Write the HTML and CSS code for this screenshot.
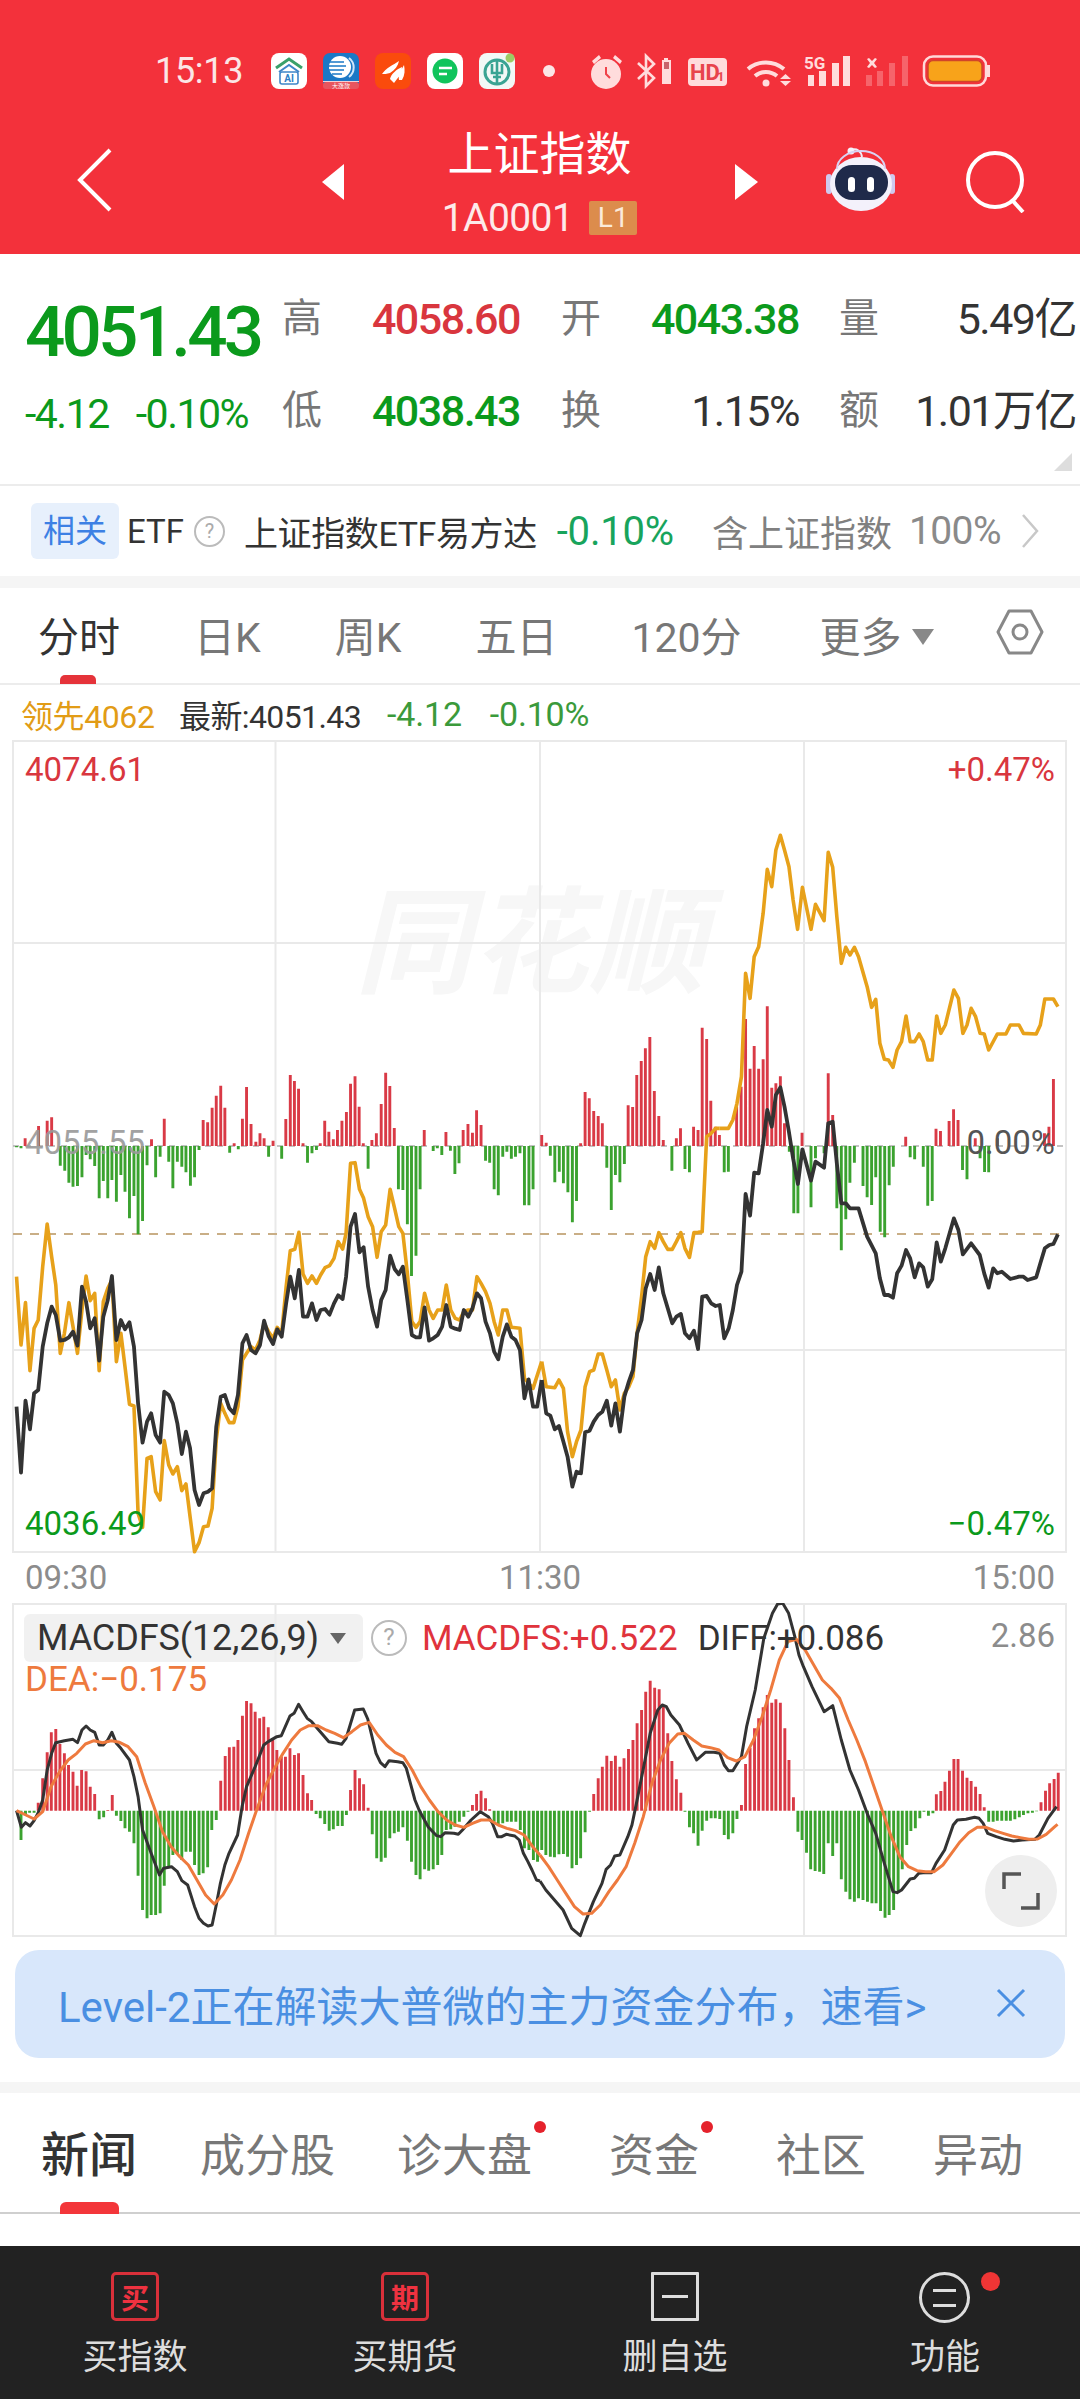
FILE: index.html
```html
<!DOCTYPE html>
<html lang="zh-CN">
<head>
<meta charset="utf-8">
<title>上证指数</title>
<link rel="stylesheet" href="styles.css">
</head>
<body>
<div class="page">
<header class="header">
  <div class="status">
    <span class="clock">15:13</span>
    <div class="apps">
      <svg class="app" viewBox="0 0 36 36"><rect width="36" height="36" rx="8" fill="#fff"/><path d="M5 15 18 6l13 9" fill="none" stroke="#3aa06a" stroke-width="3"/><path d="M8 19 18 12l10 7" fill="none" stroke="#3f86c8" stroke-width="2"/><rect x="9" y="19" width="18" height="12" rx="2" fill="none" stroke="#3f86c8" stroke-width="1.6"/><text x="18" y="29" class="app-ai">AI</text></svg>
      <svg class="app" viewBox="0 0 36 36"><rect width="36" height="36" rx="7" fill="#1b78c6"/><circle cx="17" cy="14" r="11" fill="#fff"/><path d="M6 9h15M6 13h17M6 17h15M9 21h10" stroke="#1b78c6" stroke-width="1.6"/><path d="M26 5a12 12 0 0 1 0 19" fill="none" stroke="#cfe6f8" stroke-width="2"/><path d="M0 28h36v1H0z" fill="#f4d0d4"/><rect y="29" width="36" height="7" rx="3" fill="#e8555e"/><text x="18" y="35" class="app-tiny">大涨款</text></svg>
      <svg class="app" viewBox="0 0 36 36"><rect width="36" height="36" rx="8" fill="#fa4b0c"/><path d="M7 21C11 15 18 12 24 8c-1 5-4 9-9 12-3 1-6 1-8 1zM15 26c1-5 7-10 12-12 0 5-2 9-5 12l-3 4zM24 27c-1-4 2-10 5-15 1 5 1 10-2 15z" fill="#fff"/></svg>
      <svg class="app" viewBox="0 0 36 36"><rect width="36" height="36" rx="8" fill="#fff"/><circle cx="18" cy="18" r="12.5" fill="#10c45c"/><path d="M12 15h13M12 21h8" stroke="#fff" stroke-width="2.6"/></svg>
      <svg class="app" viewBox="0 0 36 36"><rect width="36" height="36" rx="8" fill="#f2f8f6"/><circle cx="18" cy="19" r="12" fill="none" stroke="#3aa493" stroke-width="3"/><path d="M18 7v24M13 11v9h10v-9M14 24h8" fill="none" stroke="#3aa493" stroke-width="2.6"/><circle cx="31" cy="5" r="4.5" fill="#9ccc65"/></svg>
    </div>
    <i class="status-dot"></i>
    <svg class="sys" viewBox="590 50 400 42">
      <g class="sys-fill">
        <circle cx="606" cy="74" r="15"/>
        <path d="M592 61l7-6 2 3-7 6zM613 58l2-3 7 6-2 3z"/>
        <path d="M662 60h2v-2h4v2h3v24h-9z"/>
        <rect x="688" y="58" width="39" height="28" rx="4"/>
        <path d="M780 79l5.500-5 5.500 5zM780 81h11l-5.500 5z"/>
        <circle cx="766" cy="83" r="3.500"/>
        <path d="M808 75h6v11h-6zM819 71h7v15h-7zM832 63h7v23h-7zM843 56h7v30h-7z"/>
        <path d="M867 59l2-1 3 3 3-3 2 1-3 4 3 4-2 1-3-3-3 3-2-1 3-4z"/>
        <path d="M987 65h3v12h-3z"/>
      </g>
      <path d="M606 67v7l4 4" fill="none" stroke="#f0424a" stroke-width="2"/>
      <rect x="664" y="62" width="5" height="7" fill="#c8646c"/>
      <path d="M638 63l16 15-8 8V56l8 8-16 15" class="sys-line"/>
      <path d="M748 69a28 28 0 0 1 36 0M755 76a17 17 0 0 1 22 0" class="sys-line sys-wifi"/>
      <text x="690" y="80" class="sys-hd">HD</text><text x="717" y="81" class="sys-hd1">1</text>
      <text x="804" y="69" class="sys-5g">5G</text>
      <path d="M866 75h6v11h-6zM877 71h6v15h-6zM889 63h6v23h-6zM902 56h6v30h-6z" class="sys-dim"/>
      <rect x="924" y="56.500" width="62" height="29" rx="9" fill="none" stroke="#ffd9d9" stroke-width="2.500"/>
      <rect x="928" y="60.500" width="54" height="21" rx="5" fill="#f8a31a" stroke="#d0452a" stroke-width="1.500"/>
    </svg>
  </div>
  <nav class="nav">
    <svg class="back" viewBox="0 0 35 64"><path d="M33 2 3 32l30 30" fill="none" stroke="#fff" stroke-width="4"/></svg>
    <i class="tri-left"></i>
    <div class="nav-title">
      <div class="title">上证指数</div>
      <div class="code"><span>1A0001</span><b class="badge">L1</b></div>
    </div>
    <i class="tri-right"></i>
    <svg class="robot" viewBox="0 0 70 66"><path d="M26 3c6-2 10 1 11 7" fill="none" stroke="#f0ecf8" stroke-width="2"/><circle cx="26" cy="4" r="3.500" fill="#f6f2fa"/><rect x="1" y="27" width="6" height="20" rx="3" fill="#cfc9ee"/><rect x="64" y="27" width="6" height="20" rx="3" fill="#cfc9ee"/><ellipse cx="36" cy="37" rx="31" ry="27" fill="#f3f1fb"/><path d="M12 22a24 18 0 0 1 48 0" fill="none" stroke="#d9d3f3" stroke-width="2"/><rect x="10" y="18" width="53" height="35" rx="17" fill="#1f2a4a"/><rect x="23" y="30" width="7" height="15" rx="3.500" fill="#fff"/><rect x="42" y="30" width="7" height="15" rx="3.500" fill="#fff"/></svg>
    <svg class="search" viewBox="0 0 60 62"><circle cx="29" cy="29" r="27" fill="none" stroke="#fff" stroke-width="4"/><path d="M46 49l11 12" stroke="#fff" stroke-width="4"/></svg>
  </nav>
</header>

<section class="quote">
  <div class="q-main">4051.43</div>
  <div class="q-label">高</div><div class="q-val red">4058.60</div>
  <div class="q-label">开</div><div class="q-val green">4043.38</div>
  <div class="q-label">量</div><div class="q-val dark">5.49亿</div>
  <div class="q-change"><span>-4.12</span><span>-0.10%</span></div>
  <div class="q-label">低</div><div class="q-val green">4038.43</div>
  <div class="q-label">换</div><div class="q-val dark">1.15%</div>
  <div class="q-label">额</div><div class="q-val dark">1.01万亿</div>
  <i class="q-corner"></i>
</section>

<section class="related">
  <span class="rel-badge">相关</span>
  <span class="rel-etf">ETF</span>
  <i class="help rel-help">?</i>
  <span class="rel-name">上证指数ETF易方达</span>
  <span class="rel-pct">-0.10%</span>
  <span class="rel-hold">含上证指数</span>
  <span class="rel-num">100%</span>
  <svg class="rel-chev" viewBox="0 0 18 36"><path d="M2 2l14 16L2 34" fill="none" stroke="#c8c8c8" stroke-width="2.500"/></svg>
</section>

<div class="band"></div>

<section class="tabs">
  <span class="tab tab-on">分时</span>
  <span class="tab">日K</span>
  <span class="tab">周K</span>
  <span class="tab">五日</span>
  <span class="tab">120分</span>
  <span class="tab tab-more">更多<i class="more-tri"></i></span>
  <svg class="hex" viewBox="0 0 48 46"><path d="M13 2h22l11 21-11 21H13L2 23z" fill="none" stroke="#888" stroke-width="3" stroke-linejoin="round"/><circle cx="24" cy="23" r="7" fill="none" stroke="#888" stroke-width="3"/></svg>
</section>

<div class="legend">
  <span class="lg-gold">领先4062</span>
  <span class="lg-dark">最新:4051.43</span>
  <span class="lg-green">-4.12</span>
  <span class="lg-green lg-last">-0.10%</span>
</div>

<section class="chart">
  <div class="wm">同花顺</div>
  <svg class="chart-svg" viewBox="0 740 1080 814">
    <path class="grid" d="M13 741H1066V1552H13ZM275.500 741V1552M540 741V1552M804 741V1552M13 943H1066M13 1350H1066"/>
    <path class="base" d="M13 1146H1066"/>
    <path class="dash" d="M13 1234H1066"/>
    <g transform="translate(0,1120) scale(.34435,.33333)">
      <path class="v-red" d="M73 78V55M112 78V18M137 78V2M150 78V-8M440 78V58M477 78V-4M590 78V0M603 78V7M616 78V-37M628 78V-73M641 78V-103M653 78V-37M680 78V70M704 78V-4M716 78V-99M729 78V12M743 78V65M755 78V40M767 78V55M793 78V62M830 78V-3M843 78V-135M855 78V-117M867 78V-94M880 78V70M930 78V70M943 78V2M955 78V35M968 78V58M980 78V30M993 78V2M1006 78V-24M1018 78V-109M1031 78V-131M1043 78V-40M1055 78V70M1080 78V60M1093 78V40M1107 78V-48M1120 78V-142M1132 78V-102M1145 78V24M1232 78V30M1295 78V36M1345 78V30M1359 78V12M1372 78V38M1384 78V-29M1397 78V15"/>
      <path class="v-green" d="M48 78V82M61 78V85M175 78V137M188 78V152M200 78V188M212 78V200M225 78V198M238 78V172M250 78V105M262 78V118M275 78V138M288 78V235M300 78V183M313 78V235M325 78V180M338 78V245M351 78V165M363 78V215M376 78V295M389 78V228M401 78V343M414 78V303M427 78V136M452 78V172M465 78V110M490 78V125M502 78V205M515 78V125M528 78V140M540 78V157M553 78V197M565 78V172M578 78V90M667 78V98M692 78V88M780 78V110M818 78V116M893 78V128M906 78V100M919 78V90M1069 78V146M1157 78V208M1170 78V210M1183 78V313M1195 78V468M1208 78V407M1220 78V208M1258 78V93M1270 78V85M1283 78V105M1308 78V92M1321 78V162M1333 78V130M1410 78V122M1422 78V128M1435 78V208M1447 78V226M1460 78V110M1472 78V95M1485 78V116M1497 78V110M1510 78V100M1523 78V256M1536 78V256M1548 78V208"/>
    </g>
    <g transform="translate(540,1120) scale(.34435,.33333)">
      <path class="v-red" d="M5 78V45M18 78V68M118 78V70M131 78V-84M143 78V-65M156 78V-27M169 78V-12M181 78V10M256 78V-44M269 78V-39M281 78V-135M294 78V-177M306 78V-215M319 78V-249M332 78V-87M345 78V-12M358 78V60M396 78V55M408 78V25M446 78V20M459 78V30M471 78V-277M484 78V-243M496 78V-58M509 78V20M521 78V45M571 78V-40M584 78V-100M597 78V-303M610 78V-154M622 78V-222M635 78V-154M648 78V-182M660 78V-341M673 78V-97M685 78V-110M698 78V-131M710 78V10M761 78V38M837 78V-140M850 78V-15M1062 78V50M1150 78V26M1163 78V33M1188 78V3M1201 78V-32M1214 78V0M1264 78V55M1328 78V55M1465 78V40M1478 78V20M1491 78V-123"/>
      <path class="v-green" d="M30 78V107M43 78V187M56 78V155M68 78V190M81 78V217M94 78V307M106 78V243M194 78V143M207 78V270M219 78V165M232 78V187M245 78V132M383 78V152M421 78V147M434 78V157M535 78V157M547 78V155M724 78V95M737 78V280M749 78V280M787 78V262M800 78V115M825 78V100M862 78V265M875 78V391M888 78V298M900 78V188M913 78V128M938 78V198M950 78V232M963 78V255M975 78V172M988 78V335M1001 78V352M1014 78V196M1026 78V140M1075 78V112M1088 78V118M1113 78V140M1126 78V257M1139 78V243M1227 78V150M1240 78V178M1278 78V115M1291 78V156M1303 78V157"/>
    </g>
    <path class="gold" transform="translate(0,1120) scale(.34435,.33333)" d="M48 470L61 675 74 548 87 752 99 625 111 600 124 440 137 312 150 410 162 495 175 700 187 640 200 548 212 620 225 700 238 570 250 468 262 542 275 520 288 752 300 545 313 505 325 480 338 725 351 640 363 740 376 853 389 858 401 1180 414 1222 427 1015 439 1010 452 1115 465 1140 477 962 490 1035 502 1062 515 1040 528 1112 540 1092 552 1190 565 1295 578 1268 591 1220 604 1218 616 1165 628 960 641 850 653 880 666 908 679 908 691 860 704 720 716 700 729 680 742 690 755 660 767 610 780 635 793 655 805 622 818 640 831 500 843 392 856 388 868 337 880 462 893 490 906 468 919 490 931 465 944 443 957 437 970 415 982 365 995 387 1005 340 1018 130 1031 128 1044 208 1056 235 1069 290 1082 320 1095 412 1107 335 1120 315 1133 208 1146 265 1158 320 1170 340 1183 460 1196 605 1208 622 1220 605 1233 520 1246 570 1258 595 1271 570 1284 570 1296 495 1309 570 1322 595 1335 600 1347 575 1360 570 1372 570 1385 470 1397 490 1410 515 1423 550 1435 605 1447 645 1460 570 1472 570 1485 622 1510 625 1523 775 1548 805 1573 725"/>
    <path class="gold" transform="translate(540,1120) scale(.34435,.33333)" d="M5 725L18 800 43 803 55 780 68 805 80 935 94 1010 106 965 119 930 131 800 144 755 156 750 169 702 181 702 194 750 207 800 219 780 232 870 245 820 258 800 270 770 282 640 295 530 307 410 320 365 333 385 345 338 358 365 371 388 384 388 396 365 409 338 421 385 434 412 447 338 459 337 471 335 484 50 497 40 510 25 522 25"/>
    <path class="gold" transform="translate(540,730) scale(.34435,.33333)" d="M522 1195L547 1195 560 1170 572 1120 585 1040 597 730 610 805 622 680 635 650 648 550 660 418 673 470 685 360 698 316 710 360 723 410 735 510 748 598 762 472 787 598 800 523 825 572 837 367 850 412 862 560 875 700 888 652 900 675 913 652 925 680 950 770 963 832 975 808 987 940 1000 988 1012 990 1025 1012 1037 960 1050 935 1063 858 1075 935 1088 935 1101 912 1113 935 1126 990 1139 990 1152 858 1164 910 1177 885 1202 780 1215 805 1228 910 1240 885 1252 835 1265 860 1278 910 1290 912 1303 960 1328 912 1353 912 1366 885 1391 885 1404 910 1441 912 1453 885 1466 807 1491 807 1504 830"/>
    <path class="black" transform="translate(0,1120) scale(.34435,.33333)" d="M48 860L61 1058 74 842 87 928 99 820 111 810 124 680 137 610 150 560 162 585 175 662 187 660 200 652 212 635 225 677 238 500 250 545 262 625 275 595 288 722 300 590 313 540 325 468 338 660 351 600 363 628 376 607 389 680 401 850 414 968 427 905 439 880 452 945 465 968 477 815 490 825 502 850 515 910 528 1002 540 935 552 985 565 1110 578 1155 591 1120 604 1115 616 1105 628 920 641 830 653 825 666 865 679 880 691 825 704 670 716 645 729 690 742 700 755 675 767 602 780 648 793 672 805 628 818 650 831 550 843 470 856 535 868 450 880 590 893 590 906 550 919 600 931 570 944 567 957 584 970 550 982 526 995 537 1005 470 1018 320 1031 282 1044 397 1056 382 1069 500 1082 570 1095 620 1107 540 1120 510 1133 407 1146 447 1158 463 1170 440 1183 540 1196 645 1208 652 1220 652 1233 562 1246 662 1258 655 1271 645 1284 620 1296 555 1309 620 1322 626 1335 630 1347 570 1360 590 1372 565 1385 520 1397 535 1410 605 1423 640 1435 695 1447 718 1460 650 1472 613 1485 650 1497 660 1510 690 1523 835 1535 778 1548 860 1560 860 1573 780"/>
    <path class="black" transform="translate(540,1120) scale(.34435,.33333)" d="M5 780L18 880 30 887 43 928 55 918 68 965 80 1010 94 1100 106 1055 119 1060 131 937 144 932 156 905 169 885 181 875 194 842 207 917 219 850 232 935 245 830 258 785 270 750 282 640 295 600 307 505 320 462 333 510 345 442 358 520 371 565 384 610 396 590 409 582 421 640 434 655 447 632 459 687 471 530 484 528 497 550 510 558 522 555 535 655 548 625 560 570 572 495 585 455 597 222 610 287 622 158 635 160 648 70 660 -30 673 20 685 -75 698 -98 710 -40 722 30 735 115 749 192 762 88 787 182 800 125 825 143 837 10 850 5 862 130 875 250 888 250 900 265 925 265 950 350 975 400 987 475 1000 525 1012 525 1025 533 1037 460 1050 437 1063 390 1075 415 1088 472 1101 430 1113 442 1126 500 1139 478 1152 367 1164 425 1177 385 1202 295 1215 330 1228 403 1252 370 1277 405 1290 460 1303 503 1316 445 1328 460 1341 455 1366 477 1391 470 1404 470 1416 480 1441 472 1453 430 1466 385 1479 375 1491 372 1504 343"/>
  </svg>
  <span class="c-label c-tl red">4074.61</span>
  <span class="c-label c-tr red">+0.47%</span>
  <span class="c-label c-ml">4055.55</span>
  <span class="c-label c-mr">0.00%</span>
  <span class="c-label c-bl green">4036.49</span>
  <span class="c-label c-br green">−0.47%</span>
</section>

<div class="times"><span>09:30</span><span>11:30</span><span>15:00</span></div>

<section class="macd">
  <svg class="chart-svg" viewBox="0 1603 1080 335">
    <path class="grid" d="M13 1604H1066V1936H13ZM275.500 1604V1936M804 1604V1936M13 1770H1066"/>
    <g transform="translate(0,1590) scale(.34435,.33333)">
      <path class="m-red" d="M111 662V638M124 662V565M137 662V487M149 662V427M162 662V417M174 662V462M187 662V490M199 662V525M212 662V545M224 662V587M237 662V540M250 662V544M262 662V590M275 662V612M313 662V660M326 662V615M641 662V572M654 662V498M666 662V472M679 662V470M691 662V450M704 662V377M716 662V333M729 662V340M741 662V365M754 662V385M766 662V380M779 662V412M792 662V445M804 662V480M817 662V500M829 662V500M842 662V475M855 662V495M867 662V490M880 662V555M893 662V610M905 662V630M1018 662V600M1031 662V540M1044 662V565M1056 662V583M1069 662V653M1372 662V645M1384 662V612M1397 662V602M1410 662V625M1422 662V658"/>
      <path class="m-green" d="M61 662V750M74 662V672M86 662V668M99 662V668M288 662V688M301 662V682M338 662V677M351 662V693M363 662V715M376 662V725M389 662V760M401 662V857M414 662V960M427 662V985M439 662V975M452 662V975M465 662V970M477 662V887M490 662V830M502 662V795M515 662V793M528 662V810M540 662V785M553 662V785M565 662V825M578 662V855M590 662V850M603 662V832M615 662V720M628 662V690M918 662V672M930 662V685M943 662V702M956 662V722M968 662V718M981 662V708M994 662V708M1006 662V675M1081 662V733M1094 662V805M1107 662V815M1119 662V803M1132 662V745M1145 662V730M1157 662V725M1170 662V712M1183 662V752M1195 662V815M1208 662V855M1220 662V868M1233 662V838M1245 662V842M1258 662V838M1271 662V825M1283 662V795M1296 662V720M1309 662V718M1321 662V710M1334 662V695M1347 662V680M1359 662V665M1435 662V695M1447 662V707M1460 662V700M1473 662V695M1485 662V695M1498 662V695M1511 662V720M1523 662V775M1536 662V780M1549 662V810M1561 662V815"/>
    </g>
    <g transform="translate(540,1590) scale(.34435,.33333)">
      <path class="m-red" d="M156 662V612M169 662V565M181 662V530M194 662V497M207 662V513M219 662V497M232 662V530M244 662V505M257 662V477M270 662V450M282 662V400M295 662V360M307 662V305M320 662V272M333 662V293M346 662V298M358 662V345M371 662V430M383 662V513M396 662V568M409 662V608M585 662V645M597 662V522M610 662V473M623 662V415M635 662V385M648 662V352M660 662V315M673 662V338M685 662V328M698 662V338M711 662V415M723 662V510M736 662V622M1151 662V613M1164 662V603M1176 662V575M1189 662V542M1202 662V507M1214 662V507M1227 662V542M1240 662V563M1252 662V573M1265 662V590M1278 662V612M1290 662V652M1455 662V637M1468 662V602M1480 662V580M1493 662V567M1505 662V548"/>
      <path class="m-green" d="M5 662V780M17 662V795M30 662V800M42 662V802M55 662V793M68 662V792M80 662V800M93 662V835M106 662V825M118 662V805M131 662V727M144 662V665M421 662V665M434 662V712M446 662V730M459 662V767M471 662V722M484 662V692M497 662V685M509 662V685M522 662V687M535 662V735M547 662V748M560 662V730M572 662V687M749 662V725M761 662V750M774 662V788M786 662V838M799 662V843M812 662V845M824 662V852M837 662V760M850 662V798M862 662V760M875 662V868M888 662V905M900 662V928M913 662V935M925 662V925M938 662V930M951 662V935M964 662V940M976 662V940M989 662V963M1002 662V983M1014 662V975M1027 662V960M1040 662V905M1052 662V838M1065 662V765M1077 662V723M1090 662V715M1103 662V685M1115 662V665M1128 662V677M1141 662V670M1303 662V695M1316 662V695M1328 662V692M1341 662V692M1354 662V692M1366 662V692M1379 662V688M1392 662V682M1404 662V675M1417 662V670M1430 662V668M1442 662V664"/>
    </g>
    <path class="m-black" transform="translate(0,1590) scale(.34435,.33333)" d="M48 662L62 712 74 698 87 708 99 692 111 668 124 630 137 540 150 490 162 458 187 452 212 448 225 458 238 420 250 408 262 420 275 427 288 465 300 465 313 450 325 427 338 460 351 475 376 510 389 560 401 620 414 720 439 790 463 855 475 835 498 830 515 845 528 872 545 885 565 950 578 985 591 1000 604 1008 616 1005 628 945 640 880 653 825 665 790 690 735 703 650 716 590 741 530 766 465 779 455 804 440 817 437 842 378 854 370 867 343 880 365 892 385 905 395 930 425 955 455 980 460 992 463 1005 445 1030 360 1055 357 1068 387 1092 490 1105 518 1118 530 1130 512 1155 515 1170 518 1180 535 1205 630 1217 660 1243 710 1268 737 1280 740 1293 728 1318 730 1331 733 1343 720 1368 690 1395 665 1418 680 1430 700 1445 740 1457 740 1470 733 1495 738 1508 750 1520 790 1533 815 1545 840 1558 870 1568 873"/>
    <path class="m-black" transform="translate(540,1590) scale(.34435,.33333)" d="M0 873L17 900 42 930 67 960 92 1015 117 1037 130 1000 155 935 180 880 192 838 205 825 217 798 232 795 255 740 267 705 280 640 305 510 320 430 342 360 355 345 367 350 380 375 405 405 430 460 455 510 480 487 505 487 522 490 535 525 547 542 560 542 585 500 600 410 625 300 650 145 675 70 690 42 705 40 722 70 740 140 752 195 765 230 790 290 825 365 850 347 875 450 900 540 925 600 950 670 975 730 1000 820 1025 905 1037 908 1050 900 1075 867 1087 865 1100 850 1112 848 1125 848 1137 848 1150 820 1175 780 1200 705 1212 690 1237 688 1262 682 1275 685 1287 700 1300 730 1325 740 1350 748 1375 753 1400 750 1437 748 1450 735 1475 685 1500 650"/>
    <path class="m-orange" transform="translate(0,1590) scale(.34435,.33333)" d="M48 662L75 675 99 687 124 665 148 590 173 545 198 510 223 490 248 462 273 452 298 458 323 452 347 457 372 470 397 500 422 580 447 650 472 725 497 770 522 800 547 825 572 870 597 915 622 942 647 915 672 870 697 810 722 730 747 655 772 585 797 535 822 490 847 450 872 420 897 407 922 407 947 420 972 430 997 443 1022 425 1047 405 1072 397 1097 435 1122 465 1147 487 1172 500 1197 540 1222 590 1247 630 1272 665 1297 690 1322 705 1347 712 1372 700 1397 690 1422 690 1447 705 1472 715 1497 722 1522 735 1547 770 1568 795"/>
    <path class="m-orange" transform="translate(540,1590) scale(.34435,.33333)" d="M0 795L25 830 50 870 75 910 100 950 125 972 150 970 175 945 200 905 225 870 250 830 275 760 300 680 325 580 350 510 375 460 400 432 420 430 445 450 470 468 495 473 520 480 545 503 570 513 595 500 620 450 645 380 670 300 695 210 720 155 745 148 770 180 795 225 820 270 845 295 870 325 895 390 920 450 945 515 970 590 995 665 1020 740 1045 800 1070 830 1095 842 1120 845 1145 845 1170 825 1195 790 1220 755 1245 728 1270 712 1295 712 1320 722 1345 730 1370 738 1395 743 1420 748 1445 747 1470 733 1495 710 1503 703"/>
  </svg>
  <div class="m-head">
    <div class="m-select"><span>MACDFS(12,26,9)</span><i class="m-tri"></i></div>
    <i class="help m-help">?</i>
    <span class="m-macd">MACDFS:+0.522</span>
    <span class="m-diff">DIFF:+0.086</span>
  </div>
  <span class="m-dea">DEA:−0.175</span>
  <span class="m-max">2.86</span>
  <div class="m-expand"><svg viewBox="0 0 38 38"><path d="M2 17V2h17M36 21v15H19" fill="none" stroke="#555" stroke-width="3.500"/></svg></div>
</section>

<div class="banner">
  <span class="banner-text">Level-2正在解读大普微的主力资金分布，速看&gt;</span>
  <svg class="banner-x" viewBox="0 0 30 30"><path d="M2 2l26 26M28 2L2 28" fill="none" stroke="#4a8fe2" stroke-width="3"/></svg>
</div>

<div class="band band-2"></div>

<section class="news">
  <span class="news-tab news-on">新闻</span>
  <span class="news-tab nt-2">成分股</span>
  <span class="news-tab nt-3">诊大盘<i class="news-dot"></i></span>
  <span class="news-tab nt-4">资金<i class="news-dot"></i></span>
  <span class="news-tab nt-5">社区</span>
  <span class="news-tab nt-6">异动</span>
</section>

<div class="spacer"></div>

<footer class="bottom">
  <div class="b-item"><div class="b-box b-red">买</div><span>买指数</span></div>
  <div class="b-item"><div class="b-box b-red b-up">期</div><span>买期货</span></div>
  <div class="b-item"><div class="b-box b-white"><i class="b-minus"></i></div><span>删自选</span></div>
  <div class="b-item"><div class="b-round"><i class="b-minus-s"></i><i class="b-minus-s"></i><i class="b-redDot"></i></div><span>功能</span></div>
</footer>
</div>
</body>
</html>
```

FILE: styles.css
```css
* { box-sizing: border-box; }
html, body { margin: 0; padding: 0; background: #fff; }
body { font-family: Roboto, "Noto Sans CJK SC", sans-serif; color: #333; }
i { font-style: normal; display: block; }
.page { width: 1080px; height: 2400px; overflow: hidden; display: flex; flex-direction: column; }
.red { color: #d9363e; }
.green { color: #0b9a1c; }
.dark { color: #333; }

/* header */
.header { height: 254px; background: #f3313b; color: #fff; flex: none; }
.status { height: 105px; padding: 37px 0 0 155px; display: flex; align-items: center; }
.clock { width: 91px; font-size: 36px; color: #fbe6e6; letter-spacing: -.3px; }
.apps { display: flex; gap: 16px; margin-left: 25px; }
.app { width: 36px; height: 36px; display: block; }
.app-ai { font: 700 10px Roboto, sans-serif; fill: #2f7fc6; text-anchor: middle; }
.app-tiny { font: 400 6px "Noto Sans CJK SC", sans-serif; fill: #fff; text-anchor: middle; }
.status-dot { width: 12px; height: 12px; border-radius: 50%; background: #fbe6e6; margin-left: 28px; }
.sys { width: 400px; height: 42px; margin-left: 35px; display: block; }
.sys-fill { fill: #ffdcdc; }
.sys-line { fill: none; stroke: #ffdcdc; stroke-width: 2.600; }
.sys-wifi { stroke-width: 4; }
.sys-hd { font: 700 22px Roboto, sans-serif; fill: #e8444c; }
.sys-hd1 { font: 700 13px Roboto, sans-serif; fill: #e8444c; }
.sys-5g { font: 700 17px Roboto, sans-serif; fill: #ffdcdc; }
.sys-dim { fill: #ffdcdc; opacity: .3; }
.nav { height: 149px; display: flex; align-items: center; padding-left: 77px; position: relative; }
.back { width: 35px; height: 64px; display: block; }
.tri-left { width: 0; height: 0; margin-left: 210px; border-style: solid; border-width: 18px 22px 18px 0; border-color: transparent #fff transparent transparent; margin-top: 5px; }
.tri-right { width: 0; height: 0; border-style: solid; border-width: 18px 0 18px 23px; border-color: transparent transparent transparent #fff; margin-top: 5px; }
.nav-title { width: 391px; display: flex; flex-direction: column; align-items: center; }
.title { font-size: 46px; line-height: 60px; color: #fff; margin-top: 2px; }
.code { font-size: 39px; line-height: 40px; display: flex; align-items: center; gap: 16px; margin-top: 14px; letter-spacing: -.6px; color: #fdeaea; }
.badge { width: 48px; height: 34px; background: #dc8c4c; border-radius: 2px; font-size: 28px; font-weight: 400; line-height: 34px; text-align: center; color: #fbeadb; letter-spacing: 0; }
.robot { width: 70px; height: 66px; margin-left: 67px; display: block; }
.search { width: 60px; height: 62px; margin-left: 71px; display: block; margin-top: 5px; }

/* quote */
.quote { flex: none; height: 232px; padding: 19px 0 0 25px; border-bottom: 2px solid #ececec; display: grid; grid-template-columns: 257px 40px 198px 81px 198px 80px 197px; grid-template-rows: 92px 92px; align-items: center; position: relative; }
.q-main { font-size: 71px; font-weight: 500; color: #0b9a1c; letter-spacing: -3.800px; margin-top: 24px; line-height: 1; white-space: nowrap; }
.q-label { font-size: 40px; color: #777; line-height: 1; justify-self: end; }
.q-val { font-size: 43px; text-align: right; letter-spacing: -1.500px; line-height: 1; font-weight: 500; white-space: nowrap; }
.q-val.dark { font-weight: 400; }
.q-change { display: flex; gap: 27px; font-size: 41px; color: #0b9a1c; letter-spacing: -1.500px; margin-top: 6px; white-space: nowrap; }
.q-corner { position: absolute; right: 8px; bottom: 13px; width: 18px; height: 18px; background: #ddd; clip-path: polygon(100% 0, 100% 100%, 0 100%); }

/* related row */
.related { flex: none; height: 90px; display: flex; align-items: center; padding-left: 31px; font-size: 34px; white-space: nowrap; }
.rel-badge { width: 88px; height: 56px; background: #e7f0fc; color: #3d80e4; border-radius: 6px; font-size: 32px; line-height: 56px; text-align: center; }
.rel-etf { margin-left: 8px; color: #333; font-size: 33px; }
.help { width: 31px; height: 31px; border: 2px solid #bbb; border-radius: 50%; color: #aaa; font-size: 20px; line-height: 27px; text-align: center; }
.rel-help { margin-left: 10px; }
.rel-name { margin-left: 19px; color: #333; font-size: 34px; letter-spacing: -.4px; }
.rel-pct { margin-left: 20px; color: #18a45c; font-size: 40px; letter-spacing: -.2px; }
.rel-hold { margin-left: 38px; color: #808080; font-size: 36px; }
.rel-num { margin-left: 17px; color: #8a8a8a; font-size: 39px; letter-spacing: -.6px; }
.rel-chev { width: 18px; height: 36px; margin-left: 20px; display: block; }
.band { flex: none; height: 12px; background: #f5f5f5; }

/* tabs */
.tabs { flex: none; height: 97px; display: flex; align-items: center; padding: 6px 0 0 38px; gap: 74px; border-bottom: 2px solid #ececec; position: relative; font-size: 41px; color: #777; }
.tab { line-height: 1; white-space: nowrap; }
.tab-on { color: #333; }
.tab-on::after { content: ""; position: absolute; left: 60px; bottom: -1px; width: 36px; height: 9px; background: #e5333a; border-radius: 5px 5px 0 0; }
.tab-more { display: flex; align-items: center; gap: 10px; margin-left: 4px; }
.more-tri { width: 0; height: 0; border-style: solid; border-width: 16px 11px 0; border-color: #888 transparent transparent; margin-top: -4px; }
.hex { position: absolute; left: 996px; top: 21px; width: 48px; height: 46px; }

/* legend */
.legend { flex: none; height: 55px; display: flex; align-items: center; padding-left: 21px; font-size: 32px; white-space: nowrap; padding-top: 2px; }
.lg-gold { color: #e29c16; width: 132px; font-size: 32px; letter-spacing: -.4px; }
.lg-dark { color: #333; margin-left: 26px; letter-spacing: -.6px; }
.lg-green { color: #3b9a3b; margin-left: 26px; font-size: 34px; letter-spacing: -.2px; }
.lg-last { margin-left: 28px; }

/* chart */
.chart { flex: none; height: 814px; position: relative; }
.chart-svg { display: block; width: 1080px; height: 100%; position: relative; }
.wm { position: absolute; left: 355px; top: 142px; font-size: 116px; line-height: 125px; color: #f7f7f7; font-style: italic; font-weight: 700; white-space: nowrap; letter-spacing: 1px; }
.grid { fill: none; stroke: #e9e9e9; stroke-width: 2; }
.base { fill: none; stroke: #b0b0b0; stroke-width: 1.500; stroke-dasharray: 6 6; }
.dash { fill: none; stroke: #c9ae86; stroke-width: 2; stroke-dasharray: 9 8; }
.v-red, .m-red { fill: none; stroke: #d93a46; stroke-width: 2.900; vector-effect: non-scaling-stroke; }
.v-green, .m-green { fill: none; stroke: #3ba22f; stroke-width: 2.900; vector-effect: non-scaling-stroke; }
.gold { fill: none; stroke: #e7a11a; stroke-width: 3.600; stroke-linejoin: round; vector-effect: non-scaling-stroke; }
.black { fill: none; stroke: #333; stroke-width: 3.800; stroke-linejoin: round; vector-effect: non-scaling-stroke; }
.m-black { fill: none; stroke: #333; stroke-width: 3; stroke-linejoin: round; vector-effect: non-scaling-stroke; }
.m-orange { fill: none; stroke: #ee7a3e; stroke-width: 3; stroke-linejoin: round; vector-effect: non-scaling-stroke; }
.c-label { position: absolute; font-size: 33px; line-height: 40px; white-space: nowrap; }
.c-tl { left: 25px; top: 10px; }
.c-tr { right: 25px; top: 10px; }
.c-ml { left: 25px; top: 383px; color: #999; opacity: .9; }
.c-mr { right: 25px; top: 383px; color: #555; }
.c-bl { left: 25px; top: 764px; }
.c-br { right: 25px; top: 764px; }
.times { flex: none; height: 49px; padding: 4px 25px 0; display: flex; justify-content: space-between; font-size: 33px; line-height: 40px; color: #8c8c8c; }

/* macd */
.macd { flex: none; height: 335px; position: relative; }
.m-head { position: absolute; left: 24px; top: 11px; display: flex; align-items: center; white-space: nowrap; font-size: 36px; }
.m-select { width: 339px; height: 48px; background: rgba(236,236,236,.75); border-radius: 6px; padding-left: 13px; display: flex; align-items: center; color: #333; }
.m-select span { width: 293px; letter-spacing: -.1px; }
.m-tri { width: 0; height: 0; border-style: solid; border-width: 11px 8px 0; border-color: #666 transparent transparent; }
.m-help { margin-left: 8px; width: 36px; height: 36px; font-size: 24px; line-height: 31px; }
.m-macd { margin-left: 15px; color: #e0333c; font-size: 35px; letter-spacing: 0; }
.m-diff { margin-left: 20px; color: #333; font-size: 35px; letter-spacing: -.1px; }
.m-dea { position: absolute; left: 25px; top: 55px; font-size: 35px; line-height: 44px; color: #ee7a3e; }
.m-max { position: absolute; right: 25px; top: 11px; font-size: 33px; line-height: 44px; color: #8c8c8c; }
.m-expand { position: absolute; left: 985px; top: 252px; width: 72px; height: 72px; border-radius: 50%; background: #eee; display: flex; align-items: center; justify-content: center; }
.m-expand svg { width: 38px; height: 38px; display: block; }

/* banner */
.banner { flex: none; height: 108px; margin: 12px 15px 0; background: #d8e7fb; border-radius: 24px; display: flex; align-items: center; padding: 0 39px 2px 43px; justify-content: space-between; }
.banner-text { font-size: 42px; color: #4a8fe2; white-space: nowrap; letter-spacing: 0; }
.banner-x { width: 30px; height: 30px; display: block; }
.band-2 { margin-top: 24px; height: 11px; }

/* news tabs */
.news { flex: none; height: 121px; display: flex; align-items: center; padding: 7px 0 0 41px; border-bottom: 2px solid #cfcfcf; position: relative; font-size: 45px; color: #777; }
.news-tab { position: relative; line-height: 1; white-space: nowrap; }
.news-on { font-size: 48px; color: #333; font-weight: 500; position: static; }
.news-on::after { content: ""; position: absolute; left: 60px; bottom: -2px; width: 59px; height: 12px; background: #f3363a; border-radius: 6px 6px 0 0; }
.nt-2 { margin-left: 63px; }
.nt-3 { margin-left: 62px; }
.nt-4 { margin-left: 77px; }
.nt-5 { margin-left: 77px; }
.nt-6 { margin-left: 67px; }
.news-dot { position: absolute; right: -14px; top: -13px; width: 12px; height: 12px; border-radius: 50%; background: #e5222c; }
.spacer { flex: none; height: 32px; }

/* bottom */
.bottom { flex: none; height: 153px; background: #222; display: grid; grid-template-columns: repeat(4, 270px); color: #ddd; }
.b-item { display: flex; flex-direction: column; align-items: center; padding-top: 26px; font-size: 35px; }
.b-item span { line-height: 48px; margin-top: 13px; }
.b-box { width: 48px; height: 49px; border-radius: 5px; display: flex; align-items: center; justify-content: center; font-size: 28px; font-weight: 700; }
.b-red { border: 3px solid #d9303a; color: #ef3240; }
.b-white { border: 3px solid #ddd; border-radius: 1px; }
.b-minus { width: 26px; height: 3px; background: #ddd; }
.b-round { width: 51px; height: 51px; border: 3px solid #ddd; border-radius: 50%; display: flex; flex-direction: column; align-items: center; justify-content: center; gap: 12px; position: relative; margin-bottom: -2px; margin-left: -2px; }
.b-minus-s { width: 23px; height: 3px; background: #ddd; }
.b-redDot { position: absolute; left: 59px; top: -3px; width: 19px; height: 19px; border-radius: 50%; background: #ef3535; }
```
